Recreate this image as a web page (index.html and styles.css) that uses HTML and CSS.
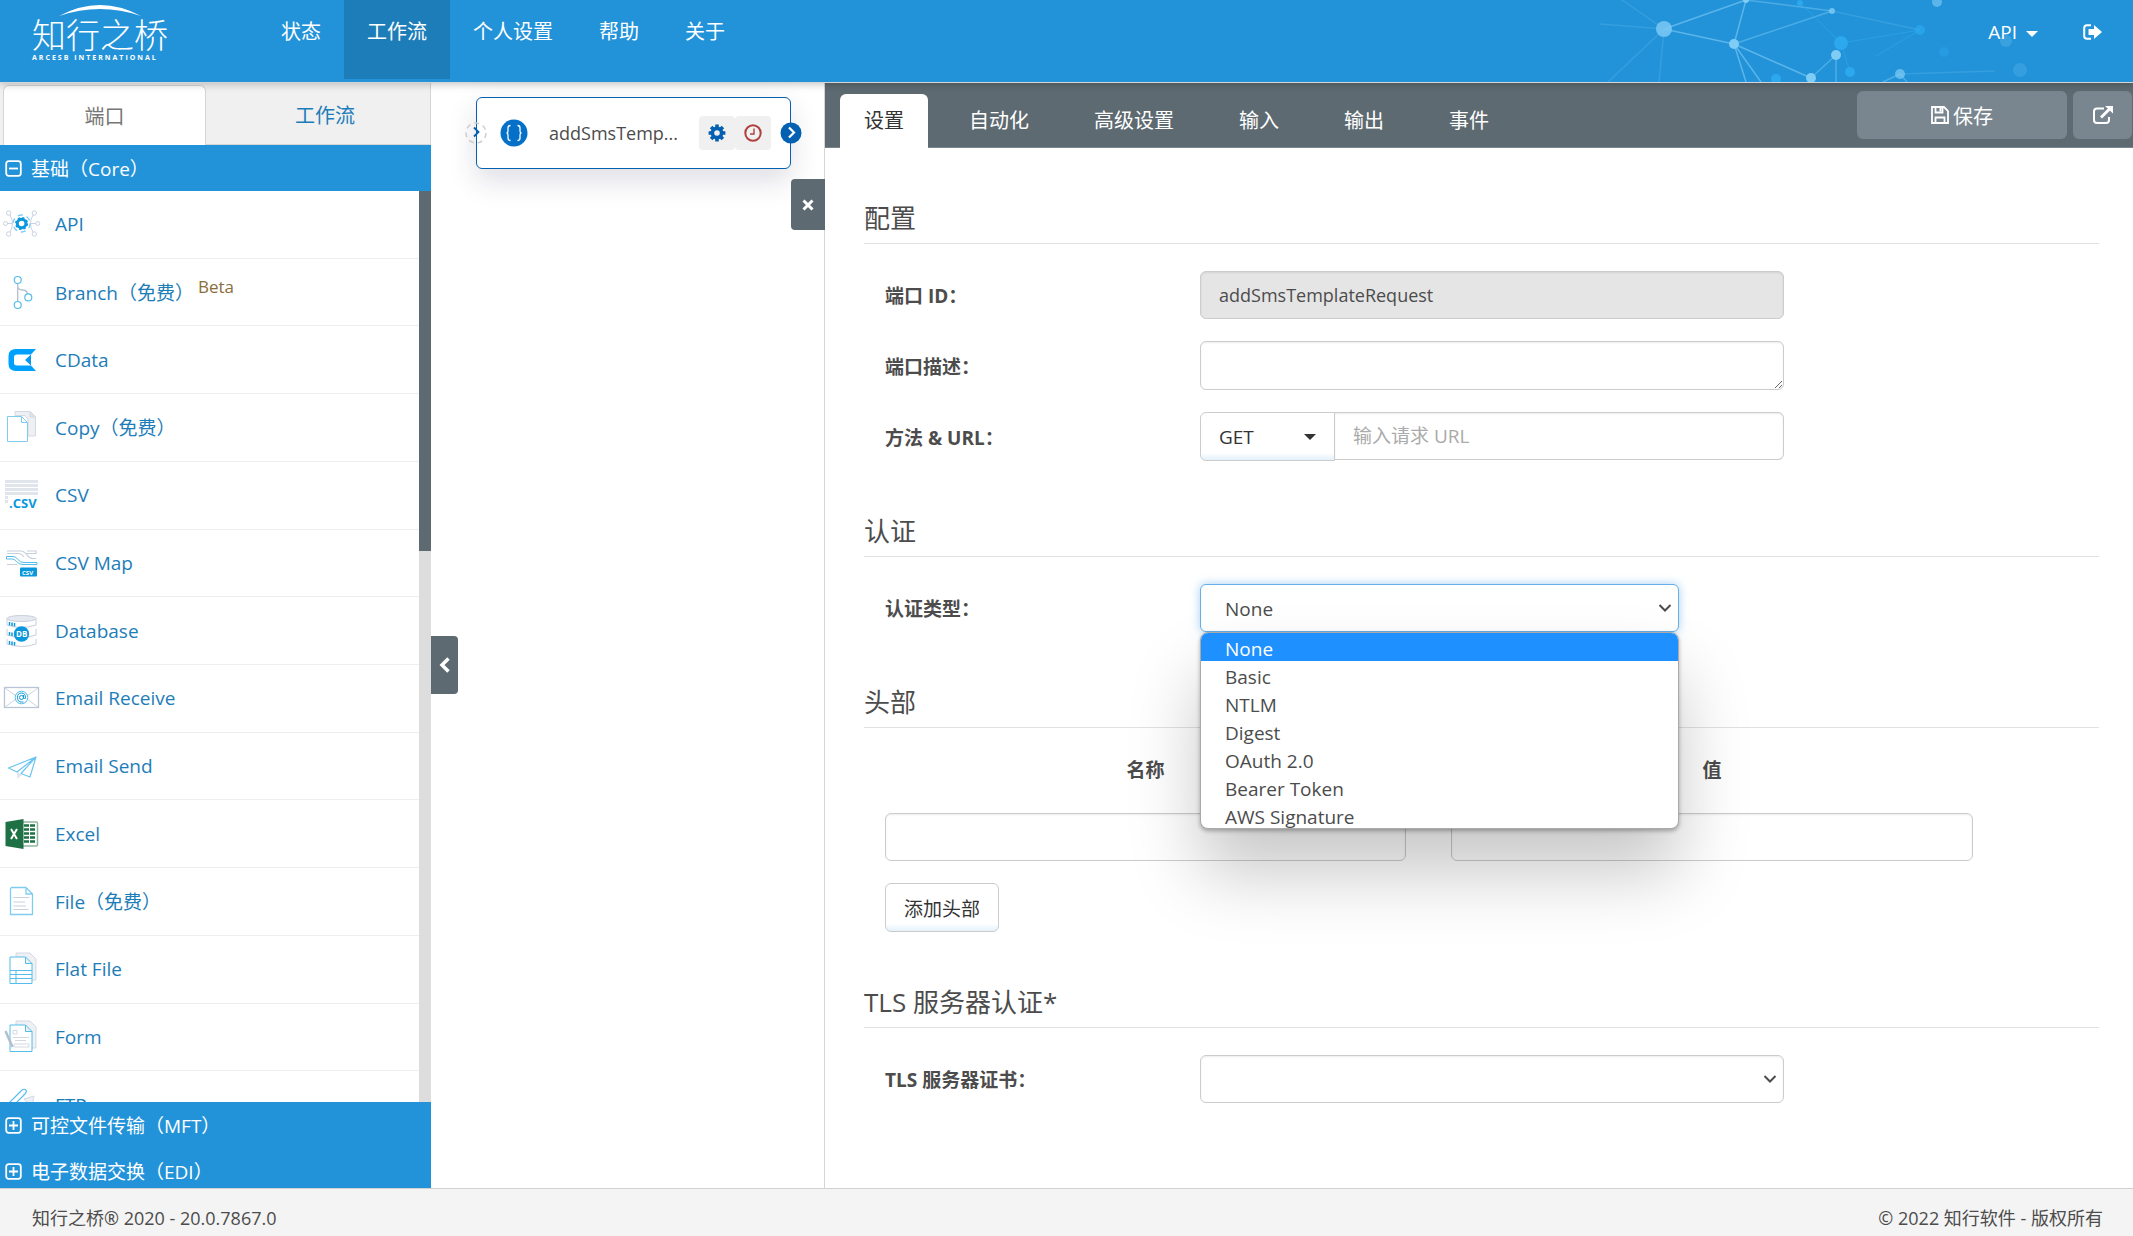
FILE: index.html
```html
<!DOCTYPE html>
<html lang="zh-CN">
<head>
    <meta charset="UTF-8">
    <meta name="viewport" content="width=device-width, initial-scale=1.0">
    <title>知行之桥</title>
    <link rel="stylesheet" href="styles.css">
</head>
<body>

<svg class="sprite" aria-hidden="true">
    <symbol id="gear" viewBox="0 0 18 18">
        <circle cx="9" cy="9" r="4.6" fill="none" stroke="currentColor" stroke-width="3.6"/>
        <g stroke="currentColor" stroke-width="3.6">
            <path d="M9 .6v3M9 14.400v3M.6 9h3M14.400 9h3M3.100 3.100l2 2M12.900 12.900l2 2M14.900 3.100l-2 2M5.100 12.900l-2 2"/>
        </g>
    </symbol>
    <symbol id="chevron" viewBox="0 0 16 16">
        <path d="M2.500 5l5.500 5.500L13.500 5" fill="none" stroke="currentColor" stroke-width="2"/>
    </symbol>
    <symbol id="plus-box" viewBox="0 0 17 17">
        <rect x="1.200" y="1.200" width="14.600" height="14.600" rx="2.500" fill="none" stroke="currentColor" stroke-width="1.800"/>
        <path d="M4 8.500h9M8.500 4v9" stroke="currentColor" stroke-width="1.800"/>
    </symbol>
</svg>

<header class="header">
    <svg class="network" width="593" height="82" viewBox="0 0 593 82" aria-hidden="true">
        <g stroke="#7fccf5" stroke-width="1.500" fill="none">
            <path d="M124 29L206 0M124 29L194 44M194 44L271 78M194 44L206 0M194 44L206 82M194 44L221 82" opacity=".6"/>
            <path d="M206 0L292 11M194 44L292 11M271 78L296 55M296 55V82M360 74L343 82M360 74L367 82" opacity=".45"/>
            <path d="M124 29L82 0M124 29L60 24M124 29L68 82M124 29L119 82M360 74L455 71M292 11L380 30" opacity=".2"/>
        </g>
        <path d="M260 3L301 43L310 72M301 43L380 30L336 56" stroke="#2ba8ee" fill="none" opacity=".6"/>
        <g fill="#2ba8ee">
            <circle cx="301" cy="43" r="7"/><circle cx="310" cy="72" r="5"/><circle cx="260" cy="3" r="3"/>
            <circle cx="236" cy="79" r="5"/><circle cx="380" cy="30" r="5" opacity=".7"/><circle cx="404" cy="52" r="5" opacity=".4"/>
        </g>
        <g fill="#7fccf5">
            <circle cx="124" cy="29" r="8" opacity=".8"/><circle cx="194" cy="44" r="5"/><circle cx="206" cy="0" r="3"/>
            <circle cx="292" cy="11" r="3" opacity=".8"/><circle cx="296" cy="55" r="5"/><circle cx="271" cy="78" r="5"/>
            <circle cx="360" cy="74" r="5" opacity=".7"/><circle cx="397" cy="2" r="5" opacity=".6"/>
            <circle cx="466" cy="41" r="6" opacity=".25"/><circle cx="480" cy="70" r="7" opacity=".2"/>
        </g>
    </svg>
    <a class="logo" href="#">
        <svg class="logo-arc" width="136" height="12" viewBox="0 0 136 12" aria-hidden="true">
            <path d="M27 11Q68-11 109 11Q68-3 27 11Z" fill="#fff"/>
        </svg>
        <span class="logo-name">知行之桥</span>
        <span class="logo-sub">ARCESB INTERNATIONAL</span>
    </a>
    <nav class="nav">
        <a href="#">状态</a>
        <a href="#" class="active">工作流</a>
        <a href="#">个人设置</a>
        <a href="#">帮助</a>
        <a href="#">关于</a>
    </nav>
    <div class="user">
        <a href="#">API <span class="caret"></span></a>
        <a href="#" aria-label="退出">
            <svg width="20" height="16" viewBox="0 0 20 16">
                <path d="M8 1.200H4Q1.200 1.200 1.200 4v8Q1.200 14.800 4 14.800H8" fill="none" stroke="#fff" stroke-width="2"/>
                <path d="M5.500 5H11V1L19 8l-8 7v-4H5.500Z" fill="#fff"/>
            </svg>
        </a>
    </div>
</header>

<main class="main">
    <aside class="sidebar">
        <div class="side-tabs">
            <button class="side-tab active" type="button">端口</button>
            <button class="side-tab" type="button">工作流</button>
        </div>
        <button class="group" type="button">
            <svg width="17" height="17" viewBox="0 0 17 17"><rect x="1.200" y="1.200" width="14.600" height="14.600" rx="2.500" fill="none" stroke="#fff" stroke-width="1.800"/><path d="M4 8.500h9" stroke="#fff" stroke-width="1.800"/></svg>
            基础（Core）
        </button>
        <div class="ports">
            <ul class="port-list">
                <li><a href="#">
                    <svg class="port-icon" viewBox="0 0 38 34" fill="none">
                        <g stroke="#c9d2e0"><circle cx="5.700" cy="6" r="2.200"/><circle cx="31.300" cy="6" r="2.200"/><circle cx="2.500" cy="16.500" r="2"/><circle cx="34.700" cy="16.500" r="2"/><circle cx="5.700" cy="27" r="2.200"/><circle cx="31.300" cy="27" r="2.200"/>
                        <path d="M7 8q5 8.500 0 17M30 8q-5 8.500 0 17M4.500 16.500h5M32.700 16.500h-5"/></g>
                        <circle cx="18.600" cy="16.500" r="8.500" stroke="#7fccf5" stroke-width="1.400" stroke-dasharray="5 4"/>
                        <circle cx="18.600" cy="16.500" r="4.300" stroke="#0a98dd" stroke-width="3"/>
                        <circle cx="18.600" cy="16.500" r="5.800" stroke="#0a98dd" stroke-width="1.500" stroke-dasharray="2.300 2.250"/>
                    </svg>API</a></li>
                <li><a href="#">
                    <svg class="port-icon" viewBox="0 0 38 34" fill="none">
                        <path d="M14.700 9v17M14.700 12q1 3 5 3t5 4" stroke="#b4c0cf" stroke-width="1.300"/>
                        <g stroke="#54bdea" stroke-width="1.200"><circle cx="14.700" cy="5" r="3.500"/><circle cx="14.700" cy="30" r="3.500"/><circle cx="25.300" cy="22.400" r="3.500"/></g>
                    </svg>Branch（免费）<span class="beta">Beta</span></a></li>
                <li><a href="#">
                    <svg class="port-icon" viewBox="0 0 38 34">
                        <path d="M33 6H13Q5.500 6 5.500 13v8Q5.500 28 13 28H33L28 22.500H14Q11 22.500 11 20v-6Q11 11.500 14 11.500H28Z" fill="#00a0ff"/>
                        <path d="M28 11.500L22 17l6 5.500Z" fill="#0a98ee"/>
                    </svg>CData</a></li>
                <li><a href="#">
                    <svg class="port-icon" viewBox="0 0 38 34">
                        <path d="M12 1.500H27L32.500 7V26H25V9L22 5.500H12Z" fill="#eef0f3" stroke="#d3d9e3"/>
                        <path d="M27 1.500V7h5.500Z" fill="#dfe3ea" stroke="#d3d9e3"/>
                        <path d="M4.500 6.500H18.500L24.500 12.500V31.500H4.500ZM18.500 6.500V12.500H24.500" fill="#fff" stroke="#7fccee" stroke-linejoin="round"/>
                    </svg>Copy（免费）</a></li>
                <li><a href="#">
                    <svg class="port-icon" viewBox="0 0 38 34">
                        <path d="M2 3.500H35M2 7.500H35M2 11.500H35M2 15.500H35M2 19.500H5M2 23.500H5" stroke="#e0e4eb" stroke-width="3"/>
                        <text class="icon-csv" x="6" y="30" fill="#0a98dd">.CSV</text>
                    </svg>CSV</a></li>
                <li><a href="#">
                    <svg class="port-icon" viewBox="0 0 38 34">
                        <path d="M4 5H18Q21 5 24 9T30 12.500H33M4 18.500H14M4 7.500H16Q19 8 21 11M24 5H33V7.500H23" fill="none" stroke="#c6cfdc" stroke-width="1.200"/>
                        <path d="M3.500 10.500H10Q13 10.500 15 13.500T21 16.500H34V18.500H20Q16 18.500 13.500 15.500T9 13H3.500Z" fill="#fff" stroke="#54bdea"/>
                        <rect x="17" y="21.500" width="17" height="9" rx="1" fill="#0a98dd"/>
                        <text class="icon-map" x="19" y="28.500" fill="#fff">CSV</text>
                    </svg>CSV Map</a></li>
                <li><a href="#">
                    <svg class="port-icon" viewBox="0 0 38 34">
                        <g fill="#fff" stroke="#c6cfdc"><path d="M4 25v5q14.500 5 29 0v-5M4 15v6q14.500 5 29 0v-6M4 4v7q14.500 5 29 0V4"/><ellipse cx="18.500" cy="4.500" rx="14.500" ry="3" fill="#e6e9ef"/></g>
                        <path d="M6.500 8v3.500M9 8.500v3.500M11.500 9v3.500M6.500 18v3.500M9 18.500V22M6.500 27v3.500M9 27.500V31M11.500 28v3.500" stroke="#0a98dd" stroke-width="1.500"/>
                        <circle cx="18.500" cy="20" r="7.700" fill="#0a98dd"/>
                        <text class="icon-db" x="13" y="23" fill="#fff">DB</text>
                    </svg>Database</a></li>
                <li><a href="#">
                    <svg class="port-icon" viewBox="0 0 38 34" fill="none">
                        <rect x="1.500" y="6.500" width="34" height="20" stroke="#b9c5d6" stroke-width="1.300"/>
                        <path d="M2 7L13 15M35 7L24 15M2 26L13 18M35 26L24 18" stroke="#cdd5e1"/>
                        <circle cx="18.500" cy="16.500" r="6.300" fill="#fff" stroke="#54bdea"/>
                        <circle cx="18.500" cy="16.500" r="2" stroke="#0a98dd"/><path d="M20.500 14v3q1 2 2 0 0-5-4-5t-4 4.500 4 4.500h2" stroke="#0a98dd"/>
                    </svg>Email Receive</a></li>
                <li><a href="#">
                    <svg class="port-icon" viewBox="0 0 38 34" fill="none" stroke-linejoin="round">
                        <path d="M14 23v7l5-4Z" fill="#e3e6ec"/>
                        <path d="M33 8L5.500 19L14 23L33 8L27 28L18 24.500L33 8" stroke="#6cc5ee" stroke-width="1.200"/>
                    </svg>Email Send</a></li>
                <li><a href="#">
                    <svg class="port-icon" viewBox="0 0 38 34">
                        <rect x="18" y="5" width="16.500" height="24" rx="1" fill="#fff" stroke="#8fb8a0" stroke-width="1.500"/>
                        <path d="M21 8.500h5m1 0h5M21 12.500h5m1 0h5M21 16.500h5m1 0h5M21 20.500h5m1 0h5M21 24.500h5m1 0h5" stroke="#1e7145" stroke-width="2.500"/>
                        <path d="M2.500 5L20.500 2V32L2.500 29Z" fill="#1e7145"/>
                        <path d="M8 12L14 22M14 12L8 22" stroke="#fff" stroke-width="2"/>
                    </svg>Excel</a></li>
                <li><a href="#">
                    <svg class="port-icon" viewBox="0 0 38 34" fill="none">
                        <path d="M8.500 3.500H23L29.500 10V30.500H7.500V4.500ZM23 3.500V10H29.500" stroke="#7fccee" stroke-width="1.300" stroke-linejoin="round"/>
                        <path d="M10.500 13.500H26.500M10.500 18H22M10.500 22H23M10.500 25.500H25.500" stroke="#c9d1dd" stroke-width="1.200"/>
                    </svg>File（免费）</a></li>
                <li><a href="#">
                    <svg class="port-icon" viewBox="0 0 38 34">
                        <path d="M13 1H27L33 7V28H13Z" fill="#eef0f3" stroke="#d3d9e3"/>
                        <path d="M7 5H22.500L29 11.500V31.500H7ZM22.500 5V11.500H29M7 18.500H29M7 22.500H29M7 26.500H29M13 18.500V31.500" fill="#fff" stroke="#54bdea" stroke-linejoin="round"/>
                    </svg>Flat File</a></li>
                <li><a href="#">
                    <svg class="port-icon" viewBox="0 0 38 34">
                        <path d="M13 1H27L33 7V28H13Z" fill="#eef0f3" stroke="#d3d9e3"/>
                        <path d="M7 5H22.500L29 11.500V31.500H7ZM22.500 5V11.500H29" fill="#fff" stroke="#54bdea" stroke-linejoin="round"/>
                        <path d="M10 10.500h4v3.500h-4ZM10 17.500H26M12 20.500H23M11 24h15v3H11Z" fill="none" stroke="#d3d9e3"/>
                        <path d="M2.500 11L9.500 27" stroke="#b4bfce" stroke-width="2.500"/>
                    </svg>Form</a></li>
                <li><a href="#">
                    <svg class="port-icon" viewBox="0 0 38 34">
                        <path d="M5 16L19 2q2-1.500 4 0 1 2-1 4L9 19" fill="#fff" stroke="#54bdea" stroke-width="1.200"/>
                        <path d="M21 11L31 8L29 20Z" fill="#eef0f3" stroke="#d3d9e3"/>
                    </svg>FTP</a></li>
            </ul>
            <div class="track"><div class="thumb"></div></div>
        </div>
        <button class="group" type="button"><svg width="17" height="17"><use href="#plus-box"/></svg>可控文件传输（MFT）</button>
        <button class="group last" type="button"><svg width="17" height="17"><use href="#plus-box"/></svg>电子数据交换（EDI）</button>
        <button class="handle-left" type="button" aria-label="收起">
            <svg width="12" height="18" viewBox="0 0 12 18"><path d="M9.500 2.500L3 9L9.500 15.500" fill="none" stroke="#fff" stroke-width="3.500"/></svg>
        </button>
    </aside>

    <section class="canvas">
        <div class="node">
            <svg class="node-in" width="22" height="22" viewBox="0 0 22 22"><circle cx="11" cy="11" r="10" fill="none" stroke="#ccc" stroke-width="1.400" stroke-dasharray="5 4"/><path d="M9 5.500L13.500 10L9 14.500" fill="none" stroke="#0460b0" stroke-width="1.800"/></svg>
            <svg class="node-type" width="28" height="28" viewBox="0 0 28 28"><circle cx="14" cy="14" r="13.500" fill="#0570c8"/><path d="M10.500 6.500q-2.500 0-2.500 2.500v3q0 2-1.500 2 1.500 0 1.500 2v3q0 2.500 2.500 2.500M17.500 6.500q2.500 0 2.500 2.500v3q0 2 1.500 2-1.500 0-1.500 2v3q0 2.500-2.500 2.500" fill="none" stroke="#fff" stroke-width="1.300"/></svg>
            <span class="node-name">addSmsTemp...</span>
            <button class="node-btn" type="button" aria-label="设置"><svg width="18" height="18"><use href="#gear"/></svg></button>
            <button class="node-btn clock" type="button" aria-label="计划"><svg width="18" height="18" viewBox="0 0 18 18" fill="none" stroke="currentColor"><circle cx="9" cy="9" r="7.700" stroke-width="2"/><path d="M10 4.500V10H6" stroke-width="1.400"/></svg></button>
            <svg class="node-out" width="22" height="22" viewBox="0 0 22 22"><circle cx="11" cy="11" r="10.500" fill="#0460b0"/><path d="M9 5.500L14 10.500L9 15.500" fill="none" stroke="#fff" stroke-width="2.200"/></svg>
        </div>
        <button class="handle-right" type="button" aria-label="关闭">
            <svg width="12" height="12" viewBox="0 0 12 12"><path d="M1.500 1.500L10.500 10.500M10.500 1.500L1.500 10.500" stroke="#fff" stroke-width="3"/></svg>
        </button>
    </section>

    <section class="panel">
        <div class="panel-bar">
            <nav class="tabs">
                <a href="#" class="active">设置</a>
                <a href="#">自动化</a>
                <a href="#">高级设置</a>
                <a href="#">输入</a>
                <a href="#">输出</a>
                <a href="#">事件</a>
            </nav>
            <button class="save" type="button">
                <svg width="18" height="18" viewBox="0 0 18 18" fill="none" stroke="#fff" stroke-width="1.800"><path d="M1 1H13L17 5V17H1ZM4.500 1V6.500H11.500V1M4.500 17V11.500H13.500V17"/><path d="M9.500 2V5.500" stroke-width="2"/></svg>
                保存
            </button>
            <button class="popout" type="button" aria-label="新窗口打开">
                <svg width="20" height="18" viewBox="0 0 20 18" fill="none" stroke="#fff" stroke-width="2"><path d="M11 2.500H4Q1 2.500 1 5.500V14Q1 17 4 17H13Q16 17 16 14V11"/><path d="M8 11.500L16.500 3" stroke-width="2.800"/><path d="M12 0H20V7.500Z" fill="#fff" stroke="none"/></svg>
            </button>
        </div>

        <form class="settings">
            <h2>配置</h2>
            <div class="row">
                <label for="portId">端口 ID：</label>
                <input class="field" id="portId" type="text" value="addSmsTemplateRequest" readonly>
            </div>
            <div class="row">
                <label for="portDesc">端口描述：</label>
                <textarea class="field" id="portDesc" rows="1"></textarea>
            </div>
            <div class="row">
                <label for="url">方法 &amp; URL：</label>
                <div class="url-group">
                    <button class="btn method" type="button">GET <span class="caret"></span></button>
                    <input class="field" id="url" type="text" placeholder="输入请求 URL">
                </div>
            </div>

            <h2>认证</h2>
            <div class="row">
                <label for="authType">认证类型：</label>
                <div class="select auth">
                    <select class="field" id="authType"><option>None</option></select>
                    <svg class="select-arrow" width="16" height="16"><use href="#chevron"/></svg>
                    <ul class="options">
                        <li class="selected">None</li>
                        <li>Basic</li>
                        <li>NTLM</li>
                        <li>Digest</li>
                        <li>OAuth 2.0</li>
                        <li>Bearer Token</li>
                        <li>AWS Signature</li>
                    </ul>
                </div>
            </div>

            <h2>头部</h2>
            <table class="headers">
                <thead>
                    <tr><th id="hName">名称</th><th id="hValue">值</th></tr>
                </thead>
                <tbody>
                    <tr>
                        <td><input class="field" type="text" aria-labelledby="hName"></td>
                        <td><input class="field" type="text" aria-labelledby="hValue"></td>
                    </tr>
                </tbody>
            </table>
            <button class="btn add" type="button">添加头部</button>

            <h2>TLS 服务器认证*</h2>
            <div class="row">
                <label for="tlsCert">TLS 服务器证书：</label>
                <div class="select">
                    <select class="field" id="tlsCert"><option></option></select>
                    <svg class="select-arrow" width="16" height="16"><use href="#chevron"/></svg>
                </div>
            </div>
        </form>
    </section>
</main>

<footer class="footer">
    <span>知行之桥® 2020 - 20.0.7867.0</span>
    <span>© 2022 知行软件 - 版权所有</span>
</footer>

</body>
</html>
```
FILE: styles.css
```css
* {
    box-sizing: border-box;
}
body {
    margin: 0;
    height: 100vh;
    display: flex;
    flex-direction: column;
    overflow: hidden;
    font-family: "Open Sans", "Noto Sans CJK SC", sans-serif;
    font-size: 19px;
    color: #4c4c4c;
    background: #fff;
}
a {
    color: inherit;
    text-decoration: none;
}
button, input, select, textarea {
    font: inherit;
    color: inherit;
    margin: 0;
}
button {
    border: 0;
    padding: 0;
    background: none;
    cursor: pointer;
}
ul {
    list-style: none;
    margin: 0;
    padding: 0;
}
svg {
    display: block;
    flex: none;
}
.sprite {
    position: absolute;
    width: 0;
    height: 0;
}

/* header */
.header {
    position: relative;
    z-index: 5;
    flex: none;
    display: flex;
    height: 83px;
    padding-left: 32px;
    background: #2393d9;
    border-bottom: 1px solid #d5d5d5;
    box-shadow: 0 1px 8px rgba(0, 0, 0, 0.25);
    color: #fff;
    font-size: 20px;
}
.network {
    position: absolute;
    right: 0;
    top: 0;
}
.logo {
    width: 136px;
    margin-right: 90px;
    padding-top: 5px;
}
.logo-name {
    display: block;
    font-size: 34px;
    font-weight: 300;
    line-height: 37px;
}
.logo-sub {
    display: block;
    font-size: 7px;
    font-weight: bold;
    line-height: 8px;
    letter-spacing: 2px;
    white-space: nowrap;
}
.nav {
    display: flex;
    height: 79px;
}
.nav a {
    padding: 0 23px;
    line-height: 64px;
}
.nav .active {
    background: #1d7db9;
}
.user {
    position: relative;
    display: flex;
    align-items: center;
    gap: 45px;
    height: 64px;
    margin-left: auto;
    padding-right: 30px;
    font-size: 19px;
}
.caret {
    display: inline-block;
    vertical-align: middle;
    margin-left: 4px;
    border: 6px solid transparent;
    border-top-color: currentColor;
    border-bottom: 0;
}

.main {
    flex: 1;
    min-height: 0;
    display: flex;
}

/* ports sidebar */
.sidebar {
    position: relative;
    z-index: 2;
    flex: none;
    width: 431px;
    display: flex;
    flex-direction: column;
}
.side-tabs {
    flex: none;
    display: flex;
    height: 62px;
    padding: 2px 0 0 3px;
    background: #f0f0f0;
    border-right: 1px solid #d5d5d5;
}
.side-tab {
    flex: 1;
    padding-left: 14px;
    color: #1d7db9;
    font-size: 20px;
    border-bottom: 1px solid #d5d5d5;
}
.side-tab.active {
    flex: none;
    width: 203px;
    padding: 0;
    color: #777;
    background: #fff;
    border: 1px solid #d5d5d5;
    border-bottom: 0;
    border-radius: 6px 6px 0 0;
}
.group {
    flex: none;
    display: flex;
    align-items: center;
    gap: 9px;
    height: 46px;
    padding-left: 5px;
    background: #2393d9;
    color: #fff;
}
.group.last {
    height: 40px;
    padding-top: 6px;
}
.ports {
    flex: 1;
    min-height: 0;
    display: flex;
    overflow: hidden;
}
.port-list {
    flex: 1;
    display: grid;
    grid-template-rows: repeat(14, 1fr);
    height: 948px;
}
.port-list li {
    border-bottom: 1px solid #eee;
}
.port-list a {
    display: flex;
    align-items: center;
    height: 100%;
    padding-left: 3px;
    color: #1d7db9;
}
.port-icon {
    width: 38px;
    height: 34px;
    margin-right: 14px;
}
.icon-csv {
    font-size: 13px;
    font-weight: bold;
}
.icon-map {
    font-size: 6px;
    font-weight: bold;
}
.icon-db {
    font-size: 8px;
    font-weight: bold;
}
.beta {
    padding-bottom: 12px;
    margin-left: 4px;
    font-size: 17px;
    color: #8a6d3b;
}
.track {
    width: 12px;
    background: #ddd;
}
.thumb {
    height: 360px;
    background: #5e6a71;
}
.handle-left, .handle-right {
    position: absolute;
    display: flex;
    align-items: center;
    justify-content: center;
    background: #5e6a71;
}
.handle-left {
    left: 100%;
    top: 50%;
    width: 27px;
    height: 58px;
    border-radius: 0 4px 4px 0;
}

/* flow canvas */
.canvas {
    position: relative;
    flex: none;
    width: 394px;
    padding: 14px 33px 0 45px;
    border-right: 1px solid #d5d5d5;
}
.handle-right {
    right: -1px;
    top: 96px;
    width: 34px;
    height: 51px;
    border-radius: 4px 0 0 4px;
}
.node {
    position: relative;
    display: flex;
    align-items: center;
    height: 72px;
    padding: 0 19px 0 23px;
    background: #fff;
    border: 1px solid #0460b0;
    border-radius: 6px;
    box-shadow: 0 12px 28px rgba(40, 40, 80, 0.15);
}
.node-in, .node-out {
    position: absolute;
    top: 24px;
}
.node-in {
    left: -12px;
}
.node-out {
    right: -12px;
}
.node-name {
    flex: 1;
    padding-left: 21px;
    font-size: 18px;
}
.node-btn {
    display: flex;
    align-items: center;
    justify-content: center;
    width: 36px;
    height: 34px;
    background: #f0f0f0;
    border-radius: 4px;
    color: #0460b0;
}
.node-btn.clock {
    color: #b04040;
}

/* settings panel */
.panel {
    flex: 1;
    min-width: 0;
}
.panel-bar {
    display: flex;
    height: 65px;
    padding: 8px 1px 0 15px;
    background: #5e6a71;
    border-bottom: 1px solid #79868f;
}
.tabs {
    flex: 1;
    display: flex;
    gap: 17px;
    height: 54px;
    margin-top: 3px;
    color: #fff;
    font-size: 20px;
}
.tabs a {
    padding: 0 24px;
    line-height: 54px;
    border-radius: 6px 6px 0 0;
}
.tabs .active {
    background: #fff;
    color: #333;
}
.save, .popout {
    display: flex;
    align-items: center;
    justify-content: center;
    gap: 4px;
    height: 48px;
    background: #79868f;
    border-radius: 6px;
    color: #fff;
    font-size: 20px;
}
.save {
    width: 210px;
    margin-right: 6px;
}
.popout {
    width: 59px;
}
.settings {
    padding: 0 34px 0 39px;
}
.settings h2 {
    margin: 52px 0 27px;
    padding-bottom: 7px;
    border-bottom: 1px solid #e2e2e2;
    font-size: 26px;
    font-weight: normal;
    line-height: 36px;
}
.row {
    display: grid;
    grid-template-columns: 315px minmax(0, 584px);
    align-items: center;
    margin-bottom: 22px;
    padding-left: 21px;
}
.row label {
    font-weight: bold;
}
.field {
    display: block;
    width: 100%;
    height: 48px;
    padding: 0 18px;
    background: #fff;
    border: 1px solid #ccc;
    border-radius: 6px;
    box-shadow: inset 0 1px 2px rgba(0, 0, 0, 0.08);
    outline: 0;
}
.field[readonly] {
    background: #e5e5e5;
    font-size: 18px;
}
.field::placeholder {
    color: #aaa;
}
textarea.field {
    height: 49px;
    padding-top: 10px;
    resize: vertical;
}
.btn {
    height: 49px;
    padding: 0 18px;
    color: #333;
    background: linear-gradient(#fff 85%, #e3f1fb);
    border: 1px solid #ccc;
    border-radius: 6px;
}
.url-group {
    display: flex;
    align-items: flex-start;
}
.method {
    flex: none;
    display: flex;
    align-items: center;
    justify-content: space-between;
    width: 135px;
    border-radius: 6px 0 0 6px;
}
.url-group .field {
    border-left: 0;
    border-radius: 0 6px 6px 0;
}
.select {
    position: relative;
}
.auth {
    max-width: 479px;
}
select.field {
    appearance: none;
    padding: 2px 24px 0;
}
.auth .field {
    border-color: #66afe9;
    box-shadow: 0 0 10px rgba(102, 175, 233, 0.6);
}
.select-arrow {
    position: absolute;
    right: 6px;
    top: 16px;
}
.options {
    position: absolute;
    z-index: 3;
    top: 100%;
    left: 0;
    width: 100%;
    height: 197px;
    overflow: hidden;
    background: #fff;
    border: 1px solid #aaa;
    border-radius: 8px;
    box-shadow: 0 2px 4px rgba(0, 0, 0, 0.3), 0 44px 70px rgba(0, 0, 0, 0.22);
}
.options li {
    height: 28px;
    padding-left: 24px;
    line-height: 32px;
}
.options .selected {
    background: #1e90ff;
    color: #fff;
}
.headers {
    width: 1088px;
    max-width: 100%;
    margin: -27px 0 22px 21px;
    border-collapse: collapse;
    table-layout: fixed;
}
.headers th, .headers td {
    padding: 0;
}
.headers th {
    height: 85px;
    padding-bottom: 4px;
}
.headers th:first-child, .headers td:first-child {
    width: 566px;
    padding-right: 45px;
}
.add {
    display: block;
    margin-left: 21px;
}

/* footer */
.footer {
    position: relative;
    z-index: 5;
    flex: none;
    display: flex;
    align-items: center;
    justify-content: space-between;
    height: 48px;
    padding: 8px 30px 0 32px;
    background: #f4f4f4;
    border-top: 1px solid #d0d0d0;
    font-size: 18px;
}
```
